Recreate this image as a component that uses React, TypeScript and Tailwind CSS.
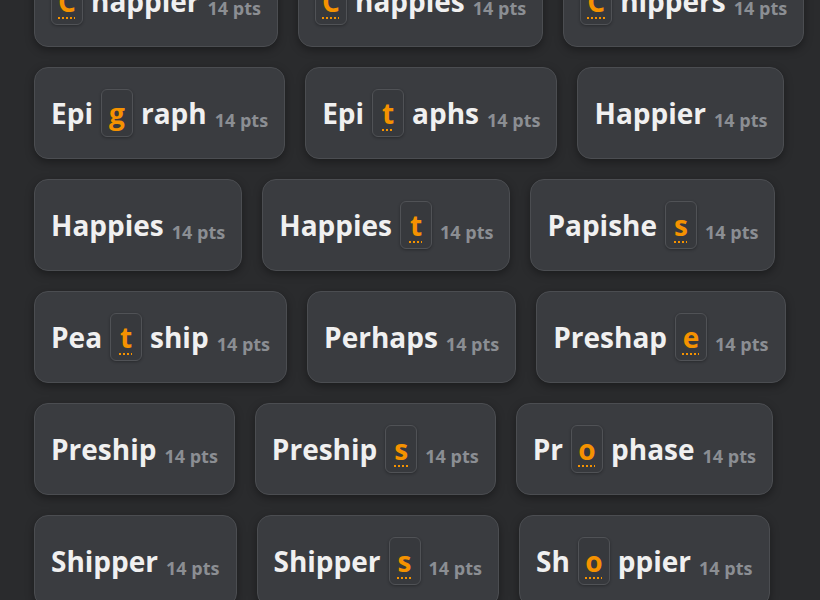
type Word = { pre: string; letter?: string; post: string };

const rows: Word[][] = [
  [
    { pre: "", letter: "C", post: "happier" },
    { pre: "", letter: "C", post: "happies" },
    { pre: "", letter: "C", post: "hippers" },
  ],
  [
    { pre: "Epi", letter: "g", post: "raph" },
    { pre: "Epi", letter: "t", post: "aphs" },
    { pre: "Happier", post: "" },
  ],
  [
    { pre: "Happies", post: "" },
    { pre: "Happies", letter: "t", post: "" },
    { pre: "Papishe", letter: "s", post: "" },
  ],
  [
    { pre: "Pea", letter: "t", post: "ship" },
    { pre: "Perhaps", post: "" },
    { pre: "Preshap", letter: "e", post: "" },
  ],
  [
    { pre: "Preship", post: "" },
    { pre: "Preship", letter: "s", post: "" },
    { pre: "Pr", letter: "o", post: "phase" },
  ],
  [
    { pre: "Shipper", post: "" },
    { pre: "Shipper", letter: "s", post: "" },
    { pre: "Sh", letter: "o", post: "ppier" },
  ],
];

function WordCard({ word }: { word: Word }) {
  return (
    <div className="flex items-center gap-2 rounded-[14px] border border-[#4b4d51] bg-[#3a3c40] px-4 py-[21px] shadow-[0_3px_8px_rgba(0,0,0,0.35)]">
      {word.pre && (
        <span className="text-[28px] font-bold leading-[38px] text-[#f0f0f0]">{word.pre}</span>
      )}
      {word.letter && (
        <span className="flex h-12 w-8 items-center justify-center rounded-[6px] border border-[#505256] bg-[#37393d] shadow-[0_1px_3px_rgba(0,0,0,0.3)]">
          <span className="text-[28px] font-bold leading-[38px] text-[#f59200] underline decoration-dotted decoration-2 underline-offset-[5px]">
            {word.letter}
          </span>
        </span>
      )}
      {word.post && (
        <span className="text-[28px] font-bold leading-[38px] text-[#f0f0f0]">{word.post}</span>
      )}
      <span className="mt-[14px] text-[18px] font-bold leading-[24px] text-[#8b8e93]">14 pts</span>
    </div>
  );
}

export default function App() {
  return (
    <div
      className="h-[600px] w-full overflow-hidden bg-[#2a2b2d]"
      style={{ fontFamily: '"Open Sans", "Noto Sans", sans-serif' }}
    >
      <div className="mt-[-45px] flex flex-col gap-5 pl-[34px]">
        {rows.map((row, i) => (
          <div key={i} className="flex gap-5">
            {row.map((w, j) => (
              <WordCard key={j} word={w} />
            ))}
          </div>
        ))}
      </div>
    </div>
  );
}
